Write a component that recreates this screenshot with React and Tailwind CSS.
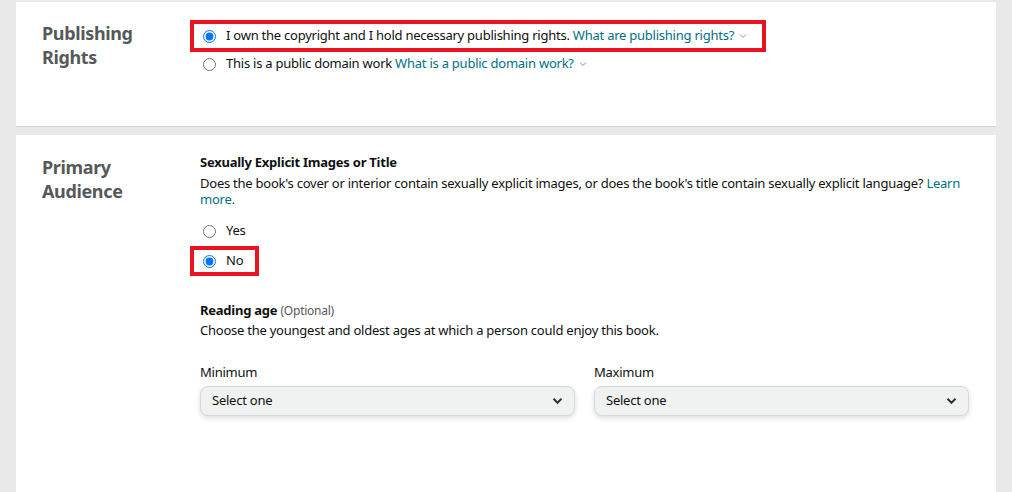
import React from 'react';

const font = { fontFamily: '"Noto Sans", "Open Sans", Arial, sans-serif' };

const Radio = ({ checked }) => (
  <input
    type="radio"
    checked={checked}
    readOnly
    className="m-0 w-[13px] h-[13px] accent-[#0075ff] shrink-0"
  />
);

const SmallChevron = () => (
  <svg width="8" height="6" viewBox="0 0 8 6" className="inline-block ml-[5px] mb-[2px]">
    <path d="M1 1.5 L4 4.5 L7 1.5" fill="none" stroke="#8a8f8f" strokeWidth="1" />
  </svg>
);

const SelectBox = ({ label }) => (
  <div className="flex-1">
    <div className="h-4 leading-4 text-[13px] text-[#0f1111]">{label}</div>
    <div className="mt-[6px] h-[30px] flex items-center justify-between pl-[11px] pr-[11px] rounded-lg border border-[#d5d9d9] bg-[#f0f2f2] shadow-[0_2px_5px_rgba(15,17,17,0.15)]">
      <span className="text-[13px] text-[#0f1111]">Select one</span>
      <svg width="11" height="8" viewBox="0 0 11 8">
        <path d="M1.5 1.8 L5.5 5.8 L9.5 1.8" fill="none" stroke="#333" strokeWidth="2" />
      </svg>
    </div>
  </div>
);

export default function App() {
  return (
    <div className="h-[492px] overflow-hidden bg-[#e9e9e9] px-4 tracking-[-0.015em]" style={font}>
      {/* Publishing Rights */}
      <div className="mt-[2px] h-[125px] bg-white border-b border-[#d0d0d0] flex pt-[18px]">
        <div className="w-[174px] pl-[26px] pt-[1px] shrink-0">
          <h2 className="text-[18px] leading-6 font-bold text-[#565959] tracking-[-0.02em]">
            Publishing
            <br />
            Rights
          </h2>
        </div>
        <div className="text-[13px] text-[#0f1111]">
          <div className="inline-flex items-center h-8 border-4 border-[#e8141f] pl-[9px] pr-[15px]">
            <Radio checked />
            <span className="ml-[10px]">
              I own the copyright and I hold necessary publishing rights.{' '}
              <span className="text-[#007185]">What are publishing rights?</span>
              <SmallChevron />
            </span>
          </div>
          <div className="flex items-center h-4 mt-1 pl-[13px]">
            <Radio checked={false} />
            <span className="ml-[10px]">
              This is a public domain work{' '}
              <span className="text-[#007185]">What is a public domain work?</span>
              <SmallChevron />
            </span>
          </div>
        </div>
      </div>

      {/* Primary Audience */}
      <div className="mt-2 h-[400px] bg-white flex pt-5">
        <div className="w-[184px] pl-[26px] shrink-0">
          <h2 className="text-[18px] leading-6 font-bold text-[#565959] tracking-[-0.02em]">
            Primary
            <br />
            Audience
          </h2>
        </div>
        <div className="flex-1 pr-[27px] -mt-[1px] text-[13px] text-[#0f1111]">
          <div className="h-4 leading-4 font-bold">Sexually Explicit Images or Title</div>
          <p className="mt-[5px] leading-4">
            Does the book's cover or interior contain sexually explicit images, or does the book's title contain sexually explicit language?{' '}
            <span className="text-[#007185]">Learn more.</span>
          </p>
          <div className="mt-4 flex items-center h-4 pl-[3px]">
            <Radio checked={false} />
            <span className="ml-[10px]">Yes</span>
          </div>
          <div className="mt-[7px] -ml-[10px] inline-flex items-center h-[30px] border-4 border-[#e8141f] pl-[9px] pr-[12px]">
            <Radio checked />
            <span className="ml-[10px]">No</span>
          </div>
          <div className="mt-[26px] h-4 leading-4">
            <span className="font-bold">Reading age</span>{' '}
            <span className="text-[12px] text-[#565959]">(Optional)</span>
          </div>
          <p className="mt-1 h-4 leading-4">Choose the youngest and oldest ages at which a person could enjoy this book.</p>
          <div className="mt-[26px] flex gap-[19px]">
            <SelectBox label="Minimum" />
            <SelectBox label="Maximum" />
          </div>
        </div>
      </div>
    </div>
  );
}
